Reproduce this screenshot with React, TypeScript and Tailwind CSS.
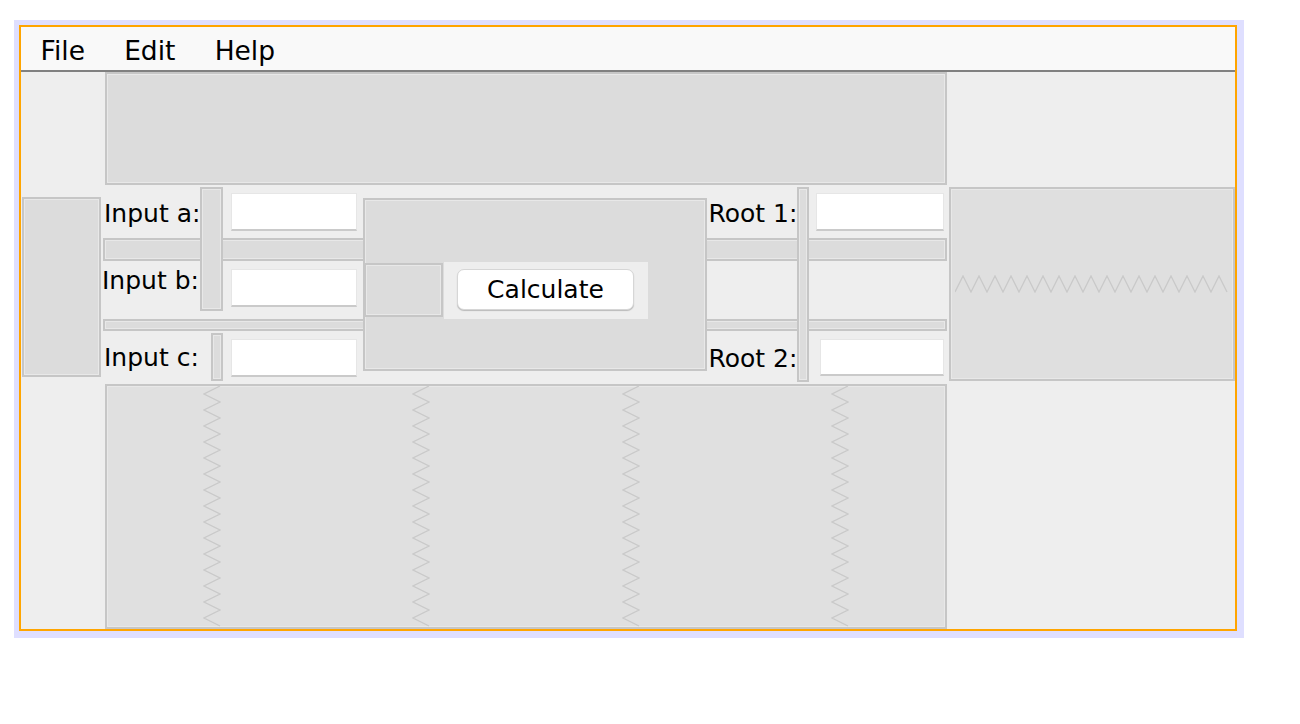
const box = 'border-2 border-[#c6c6c6] bg-[#dcdcdc] shadow-[inset_0_0_0_1px_#e8e8e8]';
const field = 'bg-white border border-[#e6e6e6] border-b-2 border-b-[#cacaca]';
const label = 'whitespace-nowrap text-[25px] leading-[29px]';

const MENUS = ['File', 'Edit', 'Help'];

function ZigzagV({ height }: { height: number }) {
  const pts: string[] = [];
  for (let i = 0; i * 8 <= height; i++) pts.push(`${i % 2 === 0 ? 17 : 1},${i * 8}`);
  return (
    <svg width="18" height={height} className="block">
      <polyline points={pts.join(' ')} fill="none" stroke="#c9c9c9" strokeWidth="1.3" />
    </svg>
  );
}

function ZigzagH({ width }: { width: number }) {
  const pts: string[] = [];
  for (let i = 0; i * 8 <= width; i++) pts.push(`${i * 8},${i % 2 === 0 ? 17 : 1}`);
  return (
    <svg width={width} height="18" className="block">
      <polyline points={pts.join(' ')} fill="none" stroke="#c9c9c9" strokeWidth="1.3" />
    </svg>
  );
}

export default function App() {
  return (
    <div className="min-h-screen bg-white pl-[14px] pt-[20px] font-['DejaVu_Sans',sans-serif] text-black">
      <div className="w-[1230px] bg-[#dfdfff] pb-[7px] pl-[5px] pr-[7px] pt-[5px]">
        <div className="flex h-[606px] w-[1218px] flex-col border-2 border-[#ffa500] bg-[#eeeeee]">
          {/* menu bar */}
          <div className="flex h-[45px] shrink-0 items-start border-b-2 border-[#808080] bg-[#f9f9f9]">
            {MENUS.map((m) => (
              <span key={m} className="whitespace-nowrap px-[19.6px] pt-[7.6px] text-[26.5px] leading-[31px]">
                {m}
              </span>
            ))}
          </div>

          <div className="flex flex-1">
            {/* left column */}
            <div className="w-[82px] shrink-0">
              <div className={`${box} ml-px mt-[125px] h-[180px] w-[79px]`} />
            </div>

            {/* middle column */}
            <div className="flex w-[844px] shrink-0 flex-col">
              <div className={`${box} ml-[2px] h-[113px] w-[842px]`} />

              <div className="grid h-[199px] grid-cols-[97px_23px_138px_348px_88px_12px_138px] grid-rows-[50px_28px_54px_16px_51px]">
                <div className={`${box} col-start-1 col-end-8 row-start-2 mt-[3px] h-[23px] w-[844px]`} />
                <div className={`${box} col-start-1 col-end-8 row-start-4 mt-[2px] h-[12px] w-[844px]`} />

                <span className={`${label} col-start-1 row-start-1 ml-px mt-[14px]`}>Input a:</span>
                <div className={`${box} col-start-2 row-start-1 row-end-4 mt-[2px] h-[124px] w-[23px]`} />
                <div className={`${field} col-start-3 row-start-1 ml-[8px] mt-[8px] h-[38px] w-[126px]`} />

                <span className={`${label} col-start-1 row-start-3 -ml-px mt-[3px]`}>Input b:</span>
                <div className={`${field} col-start-3 row-start-3 ml-[8px] mt-[6px] h-[38px] w-[126px]`} />

                <span className={`${label} col-start-1 row-start-5 ml-px mt-[9.5px]`}>Input c:</span>
                <div className={`${box} col-start-2 row-start-5 ml-[11px] h-[48px] w-[12px]`} />
                <div className={`${field} col-start-3 row-start-5 ml-[8px] mt-[6px] h-[38px] w-[126px]`} />

                {/* center panel with button */}
                <div className={`${box} col-start-4 row-start-1 row-end-6 ml-[2px] mt-[13px] h-[173px] w-[344px]`}>
                  <div className="-ml-px mt-[62px] flex items-start">
                    <div className={`${box} mt-px h-[54px] w-[79px]`} />
                    <div className="ml-px h-[57px] w-[204px] bg-[#eeeeee] pl-[13px] pt-[7px]">
                      <button
                        type="button"
                        className="flex h-[41px] w-[177px] items-center justify-center rounded-[7px] border border-[#d6d6d6] bg-white text-[25px] leading-[29px] shadow-[0_1px_1px_rgba(0,0,0,0.22)]"
                      >
                        Calculate
                      </button>
                    </div>
                  </div>
                </div>

                <span className={`${label} col-start-5 row-start-1 -ml-[0.5px] mt-[14px]`}>Root 1:</span>
                <span className={`${label} col-start-5 row-start-5 -ml-[0.5px] mt-[11px]`}>Root 2:</span>
                <div className={`${box} col-start-6 row-start-1 row-end-6 mt-[2px] h-[195px] w-[12px]`} />
                <div className={`${field} col-start-7 row-start-1 ml-[7px] mt-[8px] h-[38px] w-[128px]`} />
                <div className={`${field} col-start-7 row-start-5 ml-[11px] mt-[6px] h-[37px] w-[124px]`} />
              </div>

              <div className={`${box} ml-[2px] grid h-[245px] w-[842px] grid-cols-4 bg-[#e0e0e0]`}>
                {[0, 1, 2, 3].map((i) => (
                  <div key={i} className="flex justify-center">
                    <ZigzagV height={241} />
                  </div>
                ))}
              </div>
            </div>

            {/* right column */}
            <div className="w-[288px] shrink-0">
              <div className={`${box} ml-[2px] mt-[115px] flex h-[194px] w-[286px] items-center justify-center bg-[#dfdfdf]`}>
                <ZigzagH width={274} />
              </div>
            </div>
          </div>
        </div>
      </div>
    </div>
  );
}
